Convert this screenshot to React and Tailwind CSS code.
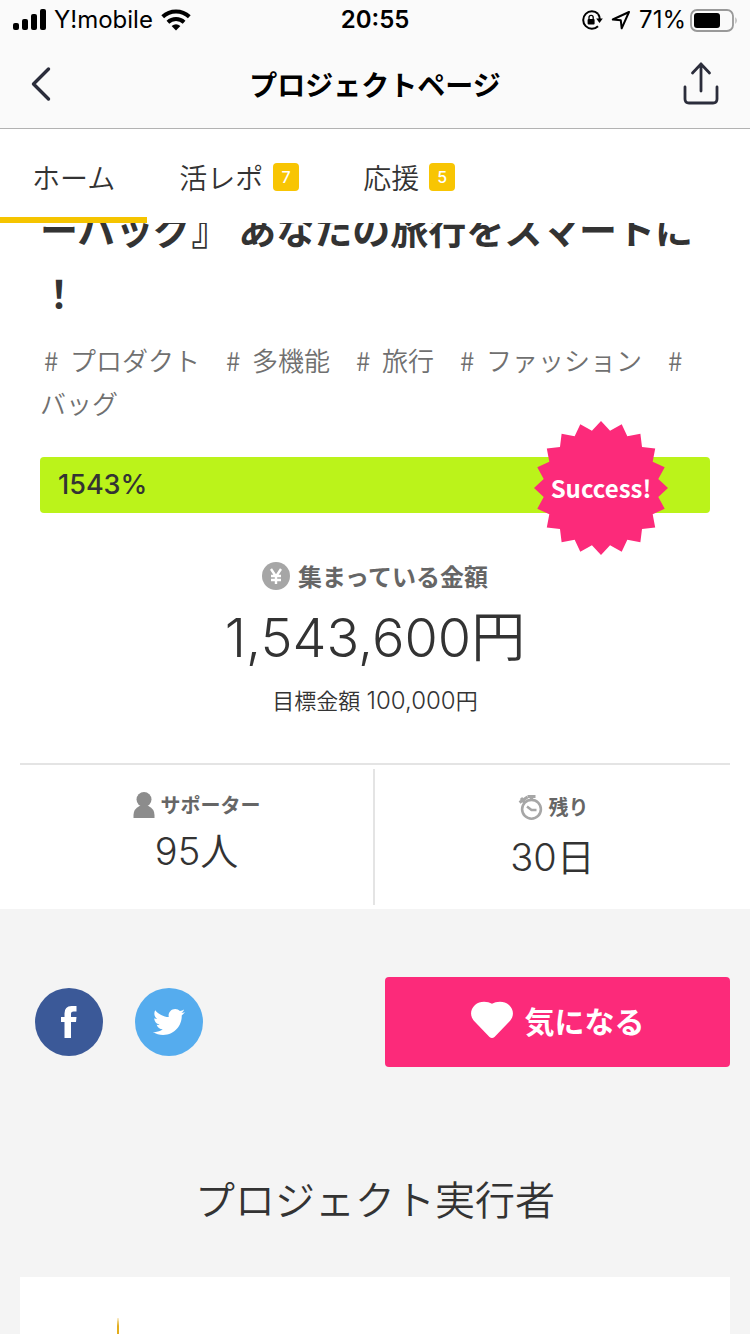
import React from "react";
import { FaTwitter } from "react-icons/fa";

const TAGS = ["プロダクト", "多機能", "旅行", "ファッション", "バッグ"];

const BURST_POINTS = Array.from({ length: 40 }, (_, i) => {
  const radius = i % 2 === 0 ? 67 : 58;
  const angle = (i * Math.PI) / 20;
  return `${(67 + radius * Math.sin(angle)).toFixed(2)},${(67 - radius * Math.cos(angle)).toFixed(2)}`;
}).join(" ");

function StatusBar() {
  return (
    <div className="grid h-10 grid-cols-[1fr_auto_1fr] items-center px-3 font-['Inter','Noto_Sans_CJK_JP',sans-serif] text-2xl text-black">
      <div className="flex items-center gap-2">
        <svg className="h-[22px] w-[34px]" viewBox="0 0 34 22" aria-hidden="true">
          <rect x="1" y="14" width="6" height="7" rx="2" />
          <rect x="10" y="10" width="6" height="11" rx="2" />
          <rect x="19" y="5" width="6" height="16" rx="2" />
          <rect x="28" y="0" width="6" height="21" rx="2" />
        </svg>
        <span>Y!mobile</span>
        <svg className="h-[22px] w-[30px]" viewBox="0 0 30 22" aria-hidden="true">
          <path d="M15 21.500 10.600 17q4.400-3.600 8.800 0z" />
          <path d="M6.900 13.200a12 12 0 0 1 16.200 0" fill="none" stroke="#000" strokeWidth="4" />
          <path d="M1.700 7.700a19.300 19.300 0 0 1 26.600 0" fill="none" stroke="#000" strokeWidth="4" />
        </svg>
      </div>
      <span className="font-semibold">20:55</span>
      <div className="flex items-center justify-end gap-1">
        <svg className="h-[22px] w-[22px]" viewBox="0 0 22 22" aria-hidden="true">
          <path d="M17 4.800A8.700 8.700 0 1 0 17 17.200" fill="none" stroke="#000" strokeWidth="2" />
          <path d="M17 4.800A8.700 8.700 0 0 1 18.700 10" fill="none" stroke="#000" strokeWidth="2" />
          <path d="M15.200 9.600h6.600l-3.300 4.400z" />
          <rect x="6.600" y="10" width="7" height="5.500" rx="1" />
          <path d="M8 10.500V8.400a2.100 2.100 0 0 1 4.200 0v2.100" fill="none" stroke="#000" strokeWidth="1.300" />
        </svg>
        <svg className="mx-1 h-[20px] w-[20px]" viewBox="0 0 20 20" aria-hidden="true">
          <path d="M18 2 1.800 9.500l8 .8.900 8z" fill="none" stroke="#000" strokeWidth="2" strokeLinejoin="round" />
        </svg>
        <span>71%</span>
        <svg className="h-[24px] w-[48px]" viewBox="0 0 48 24" aria-hidden="true">
          <rect x="1" y="2" width="42" height="21" rx="6" fill="none" stroke="#999" strokeWidth="1.800" />
          <rect x="4" y="5" width="26" height="15" rx="3" />
          <path d="M45.500 9q2.200 3.500 0 7z" fill="#999" />
        </svg>
      </div>
    </div>
  );
}

function NavBar() {
  return (
    <div className="grid h-[88px] grid-cols-[1fr_auto_1fr] items-center px-7">
      <button type="button" aria-label="戻る" className="justify-self-start">
        <svg className="h-9 w-6" viewBox="0 0 24 36" fill="none" stroke="#2b2d3b" strokeWidth="3.400" strokeLinecap="round" strokeLinejoin="round">
          <path d="M20.500 3 5.500 18l15 15" />
        </svg>
      </button>
      <h1 className="text-[28px] font-bold text-black">プロジェクトページ</h1>
      <button type="button" aria-label="共有" className="justify-self-end">
        <svg className="h-[44px] w-[42px]" viewBox="0 0 42 44" fill="none" stroke="#2b2d3b" strokeWidth="2.800" strokeLinecap="round" strokeLinejoin="round">
          <path d="M21 29V2M12.500 11 21 2l8.500 9M5 25v12q0 4 4 4h24q4 0 4-4V25" />
        </svg>
      </button>
    </div>
  );
}

function Tab({ label, count, active }) {
  return (
    <a
      href="#"
      className={
        active
          ? "flex items-center border-b-[6px] border-[#f5c400] px-8 pt-2"
          : "flex items-center border-b-[6px] border-transparent px-8 pt-2"
      }
    >
      <span className="text-[28px] font-[350]">{label}</span>
      {count && (
        <span className="ml-2.5 flex h-7 w-[26px] items-center justify-center rounded bg-[#f8c503] font-['Inter',sans-serif] text-base font-medium text-white">
          {count}
        </span>
      )}
    </a>
  );
}

export default function App() {
  return (
    <div className="flex min-h-screen flex-col bg-[#f4f4f4] font-['Noto_Sans_CJK_JP',sans-serif] text-[#333]">
      <header className="relative z-10 bg-white">
        <div className="border-b border-[#b2b2b2] bg-[#fafafa]">
          <StatusBar />
          <NavBar />
        </div>
        <nav className="flex h-[94px]">
          <Tab label="ホーム" active />
          <Tab label="活レポ" count="7" />
          <Tab label="応援" count="5" />
        </nav>
      </header>

      <main className="flex flex-1 flex-col">
        <section className="bg-white">
          <div className="px-10">
            <h2 className="-mt-[27px] text-[38px] leading-[64px] font-bold">ーバッグ』 あなたの旅行をスマートに<br />！</h2>
            <p className="mt-3.5 indent-0.5 text-[26px] leading-[43px] font-[350] text-[#707070]">
              {TAGS.map((tag) => (
                <a key={tag} href="#" className="mr-6">
                  <span className="inline-block w-7 indent-0.5">#</span>
                  {tag}
                </a>
              ))}
            </p>

            <div className="relative mt-[33px] flex h-14 items-center rounded bg-[#bbf31a] px-[18px]">
              <span className="font-['Inter',sans-serif] text-[27px] leading-8 font-medium">1543%</span>
              <div className="absolute -top-9 right-[42px] flex h-[134px] w-[134px] items-center justify-center">
                <svg className="absolute inset-0 h-full w-full" viewBox="0 0 134 134" aria-hidden="true">
                  <polygon points={BURST_POINTS} fill="#fc2a7a" />
                </svg>
                <span className="relative text-2xl font-bold text-white">Success!</span>
              </div>
            </div>

            <div className="mt-[47px] flex h-8 items-center justify-center gap-2 text-2xl font-bold text-[#666]">
              <svg className="h-7 w-7" viewBox="0 0 28 28" aria-hidden="true">
                <circle cx="14" cy="14" r="14" fill="#a6a6a6" />
                <path d="M9 7l5 7.500L19 7M14 14v8M9 14h10M9 18h10" fill="none" stroke="#fff" strokeWidth="2.400" />
              </svg>
              <span>集まっている金額</span>
            </div>
            <p className="mt-3.5 text-center font-['Inter','Noto_Sans_CJK_JP',sans-serif] text-[54px] leading-[64px] font-[350]">1,543,600円</p>
            <p className="mt-[15px] text-center font-['Inter','Noto_Sans_CJK_JP',sans-serif] text-[22px] leading-8 font-[350]">
              目標金額 <span className="text-2xl leading-8">100,000</span>円
            </p>
          </div>

          <div className="mx-5 mt-[46px] grid h-[146px] grid-cols-2 border-t-2 border-[#e4e4e4] text-center">
            <div className="my-1 border-r-2 border-[#e4e4e4] pt-5">
              <div className="flex h-8 items-center justify-center gap-1.5 text-xl font-bold text-[#666]">
                <svg className="h-[26px] w-[22px]" viewBox="0 0 22 26" fill="#8c8c8c" aria-hidden="true">
                  <circle cx="11" cy="7.500" r="7.500" />
                  <path d="M.5 26v-3q0-6 6-9h9q6 3 6 9v3z" />
                </svg>
                <span>サポーター</span>
              </div>
              <p className="mt-1.5 font-['Inter','Noto_Sans_CJK_JP',sans-serif] text-[38px] leading-[48px] font-[350]">95人</p>
            </div>
            <div className="my-1 pt-[22px]">
              <div className="flex h-8 items-center justify-center gap-1.5 text-xl font-bold text-[#666]">
                <svg className="h-[26px] w-[26px]" viewBox="0 0 26 26" fill="none" stroke="#a6a6a6" aria-hidden="true">
                  <circle cx="14.500" cy="15.300" r="9.400" strokeWidth="2.600" />
                  <path d="M10 12.500l4.500 3.500h5" strokeWidth="2.400" />
                  <path d="M10.500 2.500h8M14.500 2v4" strokeWidth="3.200" />
                  <path d="M2.500 8.500l8-5.500M4 4l4 5" strokeWidth="3" />
                </svg>
                <span>残り</span>
              </div>
              <p className="mt-2.5 font-['Inter','Noto_Sans_CJK_JP',sans-serif] text-[38px] leading-[48px] font-[350]">30日</p>
            </div>
          </div>
        </section>

        <section className="flex items-center justify-between pt-[68px] pr-5 pl-[35px]">
          <div className="flex gap-8">
            <a href="#" aria-label="Facebook" className="flex h-[68px] w-[68px] items-center justify-center rounded-full bg-[#3b5998]">
              <svg className="h-8 w-4" viewBox="0 0 16 32" fill="#fff">
                <path d="M3.500 32V16H0v-5h3.500V7.500Q3.500 0 10.500 0h5v5.500h-3Q10 5.500 10 7.500V11h5.500L15 16h-5v16z" />
              </svg>
            </a>
            <a href="#" aria-label="Twitter" className="flex h-[68px] w-[68px] items-center justify-center rounded-full bg-[#55acee]">
              <FaTwitter className="h-8 w-8 text-white" />
            </a>
          </div>
          <button type="button" className="flex h-[90px] w-[46vw] items-center justify-center gap-3 rounded bg-[#fc2a7a] pb-1 text-[30px] font-bold text-white">
            <svg className="h-[38px] w-[42px]" viewBox="0 0 42 38" fill="#fff" aria-hidden="true">
              <path d="M21 2.800C16.500.2 8.500-.2 4 4-1.200 9-1.200 15.500 3.600 20.500L18.500 36q2.500 2.200 5 0L38.400 20.500c4.800-5 4.800-11.500-.4-16.500C33.500-.2 25.500.2 21 2.800z" />
            </svg>
            <span>気になる</span>
          </button>
        </section>

        <h2 className="mt-[101px] text-center text-[40px] leading-[60px] font-[350]">プロジェクト実行者</h2>
        <div className="mx-5 mt-[49px] flex flex-1 items-end bg-white pl-[97px]">
          <svg className="h-4 w-[2px]" viewBox="0 0 2 16" aria-hidden="true">
            <path d="M.8 0h.4L2 8v8H0V8z" fill="#e3ad1c" />
          </svg>
        </div>
      </main>
    </div>
  );
}
